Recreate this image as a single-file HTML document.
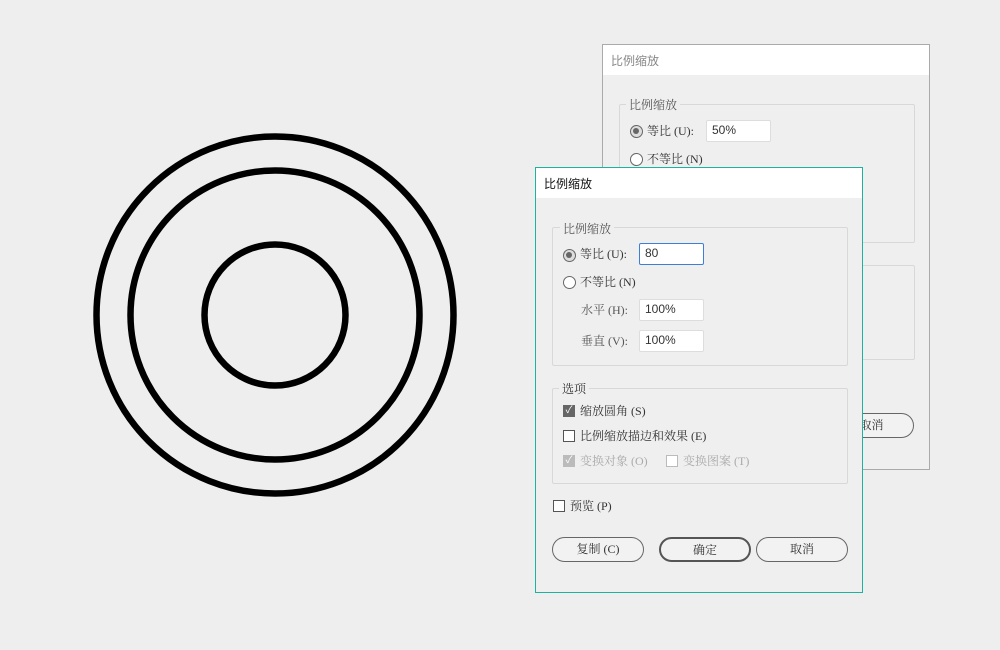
<!DOCTYPE html>
<html><head><meta charset="utf-8"><style>
*{margin:0;padding:0;box-sizing:border-box}
body{width:1000px;height:650px;background:#eeeeee;position:relative;overflow:hidden;font-family:"Liberation Sans","Noto Sans CJK SC",sans-serif;font-size:12px;color:#333}
.abs{position:absolute}
.dlg{position:absolute;background:#efefef}
.title{position:absolute;left:0;top:0;right:0;height:30px;background:#fff;padding:7px 0 0 8px;font-size:12px}
.grp{position:absolute;border:1px solid #d8d8d8;border-radius:2px}
.lg{position:absolute;background:#efefef;padding:0 3px;font-size:12px;color:#555;font-family:"Liberation Serif","Noto Serif CJK SC",serif}
.t{position:absolute;font-size:12px;color:#333;white-space:nowrap;margin-top:-2px;font-family:"Liberation Serif","Noto Serif CJK SC",serif}
.inp{position:absolute;background:#fff;border:1px solid #ddd;border-radius:2px;height:22px;padding:2px 5px;font-size:12px;font-family:"Liberation Sans",sans-serif}
.rad{position:absolute;width:13px;height:13px;border:1.5px solid #666;border-radius:50%;background:#fff}
.rad.on::after{content:"";position:absolute;left:2px;top:2px;width:6px;height:6px;border-radius:50%;background:#666}
.rad.on{background:#ddd}
.cb{position:absolute;width:12px;height:12px;border:1.3px solid #555;background:#fff}
.btn{position:absolute;height:25px;border:1.3px solid #666;border-radius:13px;text-align:center;line-height:22px;font-size:12px;background:#f2f2f2;font-family:"Liberation Serif","Noto Serif CJK SC",serif}
</style></head><body>
<svg class="abs" style="left:0;top:0" width="1000" height="650">
<g fill="none" stroke="#000" stroke-width="6.5">
<circle cx="275" cy="315" r="178.5"/>
<circle cx="275" cy="315" r="144.5"/>
<circle cx="275" cy="315" r="70.5"/>
</g></svg>

<div class="dlg" style="left:602px;top:44px;width:328px;height:426px;border:1px solid #aaa">
<div class="title" style="color:#888">比例缩放</div>
<div class="grp" style="left:16px;top:59px;width:296px;height:139px"></div>
<div class="lg" style="left:23px;top:51px">比例缩放</div>
<div class="rad on" style="left:27px;top:80px"></div>
<div class="t" style="left:44px;top:79px">等比 (U):</div>
<div class="inp" style="left:103px;top:75px;width:65px">50%</div>
<div class="rad" style="left:27px;top:108px"></div>
<div class="t" style="left:44px;top:107px">不等比 (N)</div>
<div class="grp" style="left:16px;top:220px;width:296px;height:95px"></div>
<div class="btn" style="left:226px;top:368px;width:85px">取消</div>
</div>

<div class="dlg" style="left:535px;top:167px;width:328px;height:426px;border:1px solid #1eb1a0">
<div class="title" style="color:#111">比例缩放</div>
<div class="grp" style="left:16px;top:59px;width:296px;height:139px"></div>
<div class="lg" style="left:24px;top:52px">比例缩放</div>
<div class="rad on" style="left:27px;top:81px"></div>
<div class="t" style="left:44px;top:79px">等比 (U):</div>
<div class="inp" style="left:103px;top:75px;width:65px;border:1.5px solid #3b7fd9">80</div>
<div class="rad" style="left:27px;top:108px"></div>
<div class="t" style="left:44px;top:107px">不等比 (N)</div>
<div class="t" style="left:45px;top:135px;color:#555">水平 (H):</div>
<div class="inp" style="left:103px;top:131px;width:65px">100%</div>
<div class="t" style="left:45px;top:166px;color:#555">垂直 (V):</div>
<div class="inp" style="left:103px;top:162px;width:65px">100%</div>

<div class="grp" style="left:16px;top:220px;width:296px;height:96px"></div>
<div class="lg" style="left:23px;top:212px;color:#333">选项</div>
<div class="cb" style="left:27px;top:237px;background:#666;border-color:#666;color:#fff;font-size:10px;line-height:10px;text-align:center">✓</div>
<div class="t" style="left:44px;top:236px">缩放圆角 (S)</div>
<div class="cb" style="left:27px;top:262px"></div>
<div class="t" style="left:44px;top:261px">比例缩放描边和效果 (E)</div>
<div class="cb" style="left:27px;top:287px;background:#bbb;border-color:#bbb;color:#fff;font-size:10px;line-height:10px;text-align:center">✓</div>
<div class="t" style="left:44px;top:286px;color:#aaa">变换对象 (O)</div>
<div class="cb" style="left:130px;top:287px;border-color:#bbb"></div>
<div class="t" style="left:147px;top:286px;color:#aaa">变换图案 (T)</div>

<div class="cb" style="left:17px;top:332px"></div>
<div class="t" style="left:34px;top:331px">预览 (P)</div>

<div class="btn" style="left:16px;top:369px;width:92px">复制 (C)</div>
<div class="btn" style="left:123px;top:369px;width:92px;border:2px solid #555">确定</div>
<div class="btn" style="left:220px;top:369px;width:92px">取消</div>
</div>
</body></html>
